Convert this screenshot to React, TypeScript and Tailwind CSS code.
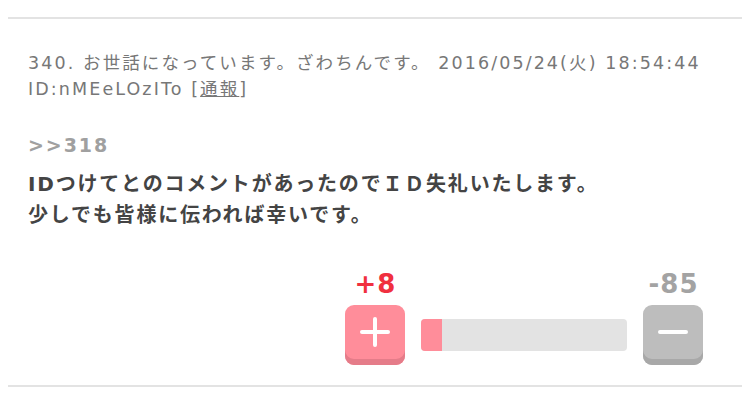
import React from "react";

const latin = { fontFamily: '"DejaVu Sans", "Noto Sans CJK JP", sans-serif' };

export default function App() {
  const plus = 8;
  const minus = 85;
  const ratio = plus / (plus + minus);
  return (
    <div className="w-[750px] h-[420px] bg-white px-[8px] pt-[17px]" style={latin}>
      <div className="border-t-2 border-[#e3e3e3] pl-[20px] pr-[39px] pt-[31px]">
        <div className="text-[17.5px] leading-[26px] tracking-[2.1px] text-[#777777]">
          <div>340. お世話になっています。ざわちんです。 2016/05/24(火) 18:54:44</div>
          <div>
            ID:nMEeLOzITo [<span className="underline">通報</span>]
          </div>
        </div>
        <div className="mt-[28px] text-[19px] leading-[30px] tracking-[1.9px] font-bold text-[#a0a0a0]">&gt;&gt;318</div>
        <div className="mt-[9px] text-[20px] leading-[31px] tracking-[1.8px] font-bold text-[#444444]">
          <div>IDつけてとのコメントがあったのでＩＤ失礼いたします。</div>
          <div>少しでも皆様に伝われば幸いです。</div>
        </div>
        <div className="mt-[38px] flex justify-end items-end gap-[16px] pb-[20px]">
          <div className="flex flex-col items-center">
            <div className="text-[26px] leading-[30px] tracking-[1px] font-bold text-[#f0303f] mb-[6px] pl-[1px]">+{plus}</div>
            <button className="relative w-[60px] h-[60px] rounded-[9px] bg-[#ff8d9a] shadow-[inset_0_-6px_0_#e57c89] flex items-center justify-center pb-[6px]">
              <span className="relative block w-[30px] h-[30px]">
                <span className="absolute left-0 top-[13px] w-[30px] h-[4px] rounded-full bg-white" />
                <span className="absolute top-0 left-[13px] w-[4px] h-[30px] rounded-full bg-white" />
              </span>
            </button>
          </div>
          <div className="mb-[14px] w-[206px] h-[32px] rounded-[4px] bg-[#e3e3e3] overflow-hidden">
            <div className="h-full bg-[#ff8d9a]" style={{ width: `${Math.max(ratio * 206, 21)}px` }} />
          </div>
          <div className="flex flex-col items-center">
            <div className="text-[26px] leading-[30px] tracking-[1px] font-bold text-[#a3a3a3] mb-[6px] pl-[1px]">-{minus}</div>
            <button className="relative w-[60px] h-[60px] rounded-[9px] bg-[#bdbdbd] shadow-[inset_0_-6px_0_#a8a8a8] flex items-center justify-center pb-[6px]">
              <span className="block w-[30px] h-[4px] rounded-full bg-white" />
            </button>
          </div>
        </div>
      </div>
      <div className="border-t-2 border-[#e3e3e3]" />
    </div>
  );
}
